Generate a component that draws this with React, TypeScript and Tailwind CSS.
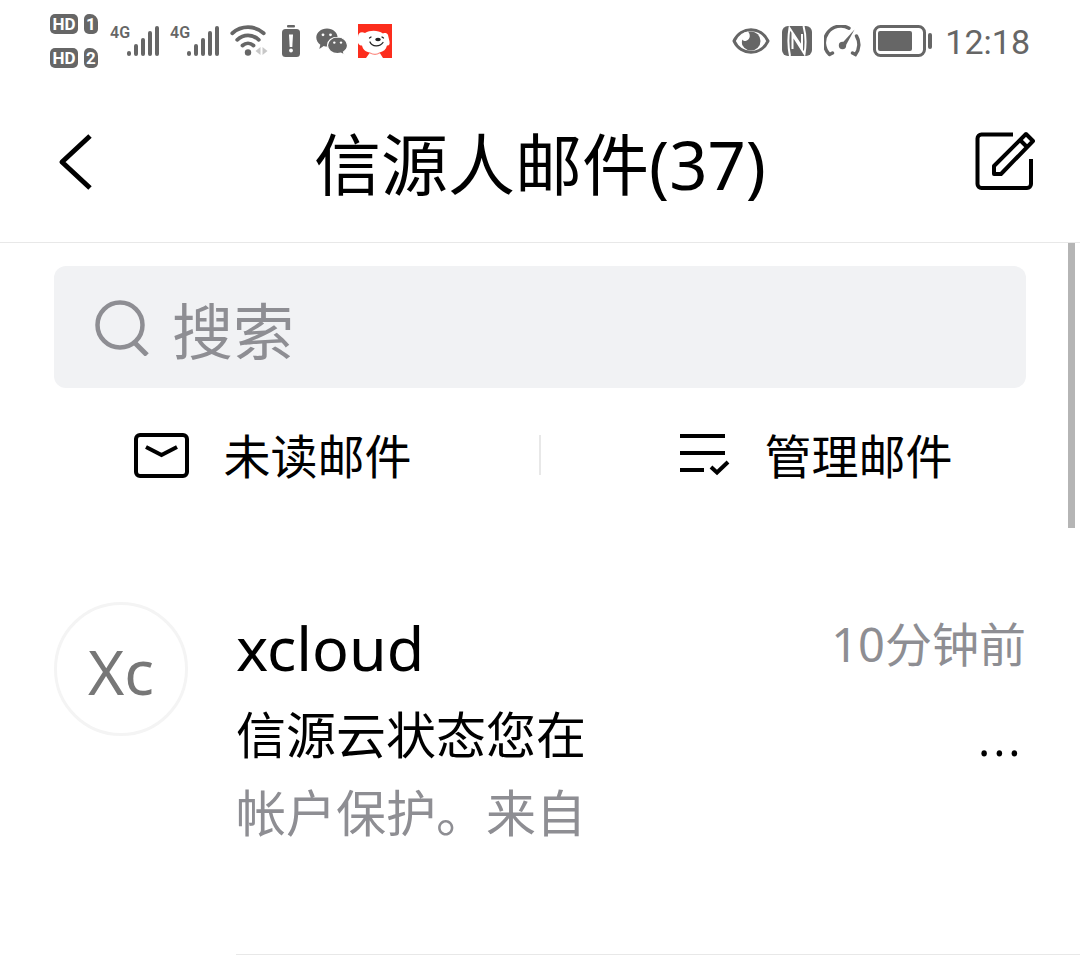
import { ReactNode } from "react"
import cn from "clsx"

interface IBadge {
  children: ReactNode
  className?: string
}

const Badge = ({ children, className }: IBadge) => (
  <span
    className={cn(
      "h-5 flex items-center justify-center rounded-[5px] bg-[#666666] text-white text-[17px] leading-5 font-bold",
      className,
    )}
  >
    {children}
  </span>
)

const Signal = () => (
  <div className="flex items-start">
    <span className="w-[17px] text-[16px] leading-4 font-semibold">4G</span>
    <svg width="33" height="32" viewBox="0 0 33 32" fill="currentColor">
      <rect x="0" y="26" width="4" height="5" rx="2" />
      <rect x="7" y="19" width="4" height="12" rx="2" />
      <rect x="14" y="13" width="4" height="18" rx="2" />
      <rect x="21" y="6" width="4" height="25" rx="2" />
      <rect x="28" y="1" width="4" height="30" rx="2" />
    </svg>
  </div>
)

const WifiIcon = () => (
  <svg width="38" height="32" viewBox="0 0 38 32" fill="none" stroke="currentColor" strokeWidth="3.8" strokeLinecap="round">
    <path d="M2.300 8.200C11.500 .2 24.500 .2 33.700 8.200" />
    <path d="M7.200 14.800C13.600 8.800 22.400 8.800 28.800 14.800" />
    <path d="M12.500 20.500C15.800 17.600 20.200 17.600 23.500 20.500" />
    <circle cx="18" cy="27.500" r="3.200" fill="currentColor" stroke="none" />
    <path d="M30.500 22v8l-5-4zM32.500 22v8l5-4z" fill="#c8c8c8" stroke="none" />
  </svg>
)

const BatteryAlertIcon = () => (
  <svg width="18" height="33" viewBox="0 0 18 33" fill="currentColor">
    <rect x="5" y="0" width="8" height="2.400" rx="1" />
    <rect x="0" y="4" width="18" height="28" rx="3.500" />
    <path d="M7 9.500h4l-.7 12.500H7.700z" fill="#fff" />
    <circle cx="9" cy="25.500" r="1.900" fill="#fff" />
  </svg>
)

const WechatIcon = () => (
  <svg width="32" height="27" viewBox="0 0 32 27" fill="currentColor">
    <path d="M11 .5C5 .5 .3 4.500 .3 9.600c0 2.900 1.500 5.400 4 7.100l-1 4.300 4.400-3c1.200.4 2 .5 3.300.5 5.900 0 10.600-4 10.600-8.900S17 .5 11 .5z" />
    <path
      d="M21.500 9c-5.600 0-10 3.700-10 8.300s4.400 8.300 10 8.300c1.200 0 2.300-.2 3.400-.5l3.500 1.900-.9-3.100c2.500-1.500 4-3.900 4-6.600 0-4.600-4.400-8.300-10-8.300z"
      stroke="#fff"
      strokeWidth="1.200"
    />
    <g fill="#fff">
      <circle cx="7" cy="6.800" r="1.400" />
      <circle cx="14.500" cy="6.800" r="1.400" />
      <circle cx="18.300" cy="14.600" r="1.200" />
      <circle cx="25" cy="14.600" r="1.200" />
    </g>
  </svg>
)

const DogIcon = () => (
  <svg width="34" height="34" viewBox="0 0 34 34">
    <rect width="34" height="34" fill="#fc2d1d" />
    <path
      d="M7 9C3 7 0 9 0 13v6c1 2 2 2.500 4 2.500C5 26 8 28 12 28.500L8 34h17l-3.500-5.500c4-1 6.500-3 7.500-7 2 .5 3-1 2.500-4L30 11c-1-2-3-2.500-5-1.500C20 6 12 6 7 9z"
      fill="#fff"
    />
    <g fill="none" stroke="#222" strokeWidth="1.300" strokeLinecap="round">
      <path d="M12 18c2 5 10 5 13 .5M11.500 14l1.500-1M24 13l1.500 1" />
      <path d="M12 29c3 1.500 7 1.500 9.500 0" stroke="#fc8d84" />
    </g>
    <ellipse cx="20" cy="15.500" rx="2.800" ry="1.700" fill="#222" />
  </svg>
)

const EyeIcon = () => (
  <svg width="38" height="28" viewBox="0 0 38 28" fill="none">
    <path d="M2 14C9-1 29-1 36 14 29 29 9 29 2 14z" stroke="currentColor" strokeWidth="3" strokeLinejoin="round" />
    <circle cx="19" cy="14" r="9.500" fill="currentColor" />
    <path d="M16 4.500c3.500 4 1.500 9-2.500 9.500-1.500 0-2.500-.5-3-1.500L9 17 7.500 12 12 5.500z" fill="#fff" />
  </svg>
)

const NfcIcon = () => (
  <svg width="30" height="30" viewBox="0 0 30 30" fill="none">
    <rect width="30" height="30" rx="6" fill="currentColor" />
    <path d="M8 30C6 21 6 11 7.500 2L20 21V8M21.500 0c2.500 9 2.500 19 1 28L10.500 9v14" stroke="#fff" strokeWidth="2" />
  </svg>
)

const GaugeIcon = () => (
  <svg width="37" height="32" viewBox="0 0 37 32" fill="none" stroke="currentColor" strokeWidth="3.400" strokeLinecap="round">
    <path d="M8.500 28L5.500 29.500M5.500 29.500A16.500 16.500 0 0 1 25 3.200M32.500 11A16.500 16.500 0 0 1 31.500 29.500l-3-1.500" />
    <path d="M30.500 4.500L21 22c-1.500 2.500-5.500 1-4.500-2z" fill="currentColor" stroke="none" />
    <circle cx="18.500" cy="20.500" r="2" fill="currentColor" />
  </svg>
)

const BatteryIcon = () => (
  <svg width="60" height="32" viewBox="0 0 60 32" fill="none">
    <rect x="1.500" y="1.500" width="50" height="29" rx="6" stroke="currentColor" strokeWidth="3" />
    <rect x="5" y="6" width="34" height="20" rx="2" fill="currentColor" />
    <rect x="55" y="8" width="4" height="16" rx="2" fill="currentColor" />
  </svg>
)

const BackIcon = () => (
  <svg width="36" height="60" viewBox="0 0 36 60" fill="none" stroke="#000" strokeWidth="5">
    <path d="M34 4L6 30L34 56" strokeLinejoin="round" />
  </svg>
)

const ComposeIcon = () => (
  <svg width="62" height="62" viewBox="0 0 62 62" fill="none" stroke="#000" strokeWidth="4" strokeLinejoin="round">
    <path d="M39 3.500H7.500a4 4 0 0 0-4 4V53a4 4 0 0 0 4 4H53a4 4 0 0 0 4-4V28" />
    <path d="M20 43V35L52 3l7 7-32 33zM46 9l7 7" />
  </svg>
)

const SearchIcon = () => (
  <svg width="56" height="58" viewBox="0 0 56 58" fill="none" stroke="#8e8e93" strokeWidth="4.500">
    <circle cx="26" cy="27" r="22.500" />
    <path d="M40.500 44.500L53 57" strokeWidth="5" />
  </svg>
)

const UnreadIcon = () => (
  <svg width="60" height="46" viewBox="0 0 60 46" fill="none" stroke="#000" strokeWidth="4">
    <rect x="4" y="3" width="51" height="41" rx="4" />
    <path d="M14 15l15.500 8L45 15" />
  </svg>
)

const ManageIcon = () => (
  <svg width="60" height="46" viewBox="0 0 60 46" fill="none" stroke="#000" strokeWidth="4">
    <path d="M7 4h45M7 21h45M7 38h24" />
    <path d="M38 35l6 5.500L55 30" />
  </svg>
)

const StatusBar = () => (
  <div className="h-[82px] px-[50px] flex items-center justify-between text-[#666666] font-[Roboto,sans-serif]">
    <div className="flex items-center gap-[10px]">
      <div className="flex flex-col gap-[14px] mr-[2px]">
        {["1", "2"].map((sim) => (
          <div key={sim} className="flex gap-[6px]">
            <Badge className="w-7">HD</Badge>
            <Badge className="w-[14px] rounded-tr-lg">{sim}</Badge>
          </div>
        ))}
      </div>
      <Signal />
      <Signal />
      <WifiIcon />
      <div className="flex items-center gap-4 ml-1">
        <BatteryAlertIcon />
        <WechatIcon />
      </div>
      <DogIcon />
    </div>
    <div className="flex items-center gap-3">
      <EyeIcon />
      <NfcIcon />
      <GaugeIcon />
      <BatteryIcon />
      <span className="pt-[2px] text-[34px] leading-10">12:18</span>
    </div>
  </div>
)

const Header = () => (
  <header className="h-[161px] px-11 flex items-center justify-between border-b border-[#e8e8e8]">
    <button type="button" aria-label="返回" className="w-[62px] pl-3">
      <BackIcon />
    </button>
    <h1 className="pt-1 text-[67px] leading-[80px]">信源人邮件(37)</h1>
    <button type="button" aria-label="写邮件">
      <ComposeIcon />
    </button>
  </header>
)

const SearchBox = () => (
  <label className="h-[122px] mx-[54px] px-10 flex items-center gap-[22px] rounded-xl bg-[#f1f2f4]">
    <SearchIcon />
    <input
      type="text"
      aria-label="搜索"
      placeholder="搜索"
      className="flex-1 min-w-0 h-24 pt-2 bg-transparent outline-none text-[61px] placeholder:text-[#8e8e93]"
    />
  </label>
)

interface IToolButton {
  icon: ReactNode
  label: string
}

const ToolButton = ({ icon, label }: IToolButton) => (
  <button type="button" className="flex-1 pl-1 flex items-center justify-center gap-8 text-[47px] leading-[60px]">
    {icon}
    <span className="pt-[2px]">{label}</span>
  </button>
)

const MailRow = () => (
  <article className="pl-[54px] flex gap-12">
    <div className="w-[134px] h-[134px] mt-[10px] pt-1 shrink-0 flex items-center justify-center rounded-full border-3 border-[#f4f4f4] text-[62px] text-[#777777]">
      Xc
    </div>
    <div className="flex-1 min-w-0 h-[363px] pr-[54px] border-b border-[#e8e8e8]">
      <div className="h-[104px] flex items-start justify-between">
        <h2 className="text-[61px] leading-[112px]">xcloud</h2>
        <time className="text-[47px] leading-[104px] text-[#8e8e93]">10分钟前</time>
      </div>
      <div className="h-[78px] pr-1 flex items-start justify-between text-[50px] leading-[78px]">
        <p>信源云状态您在</p>
        <button type="button" aria-label="更多" className="text-[62px] leading-[72px] font-light">
          ...
        </button>
      </div>
      <p className="text-[50px] leading-[78px] text-[#8e8e93]">帐户保护。来自</p>
    </div>
  </article>
)

const App = () => (
  <div className="w-full bg-white text-black font-['Noto_Sans','Noto_Sans_CJK_SC',sans-serif]">
    <StatusBar />
    <Header />
    <main className="relative pt-[23px] pb-[18px]">
      <SearchBox />
      <div className="h-[134px] flex items-center">
        <ToolButton icon={<UnreadIcon />} label="未读邮件" />
        <div className="w-[2px] h-10 bg-[#e8e8e8]" />
        <ToolButton icon={<ManageIcon />} label="管理邮件" />
      </div>
      <div className="mt-[70px]">
        <MailRow />
      </div>
      <div className="absolute top-0 right-[5px] w-[7px] h-[285px] bg-[#b5b5b5]" />
    </main>
  </div>
)

export default App
